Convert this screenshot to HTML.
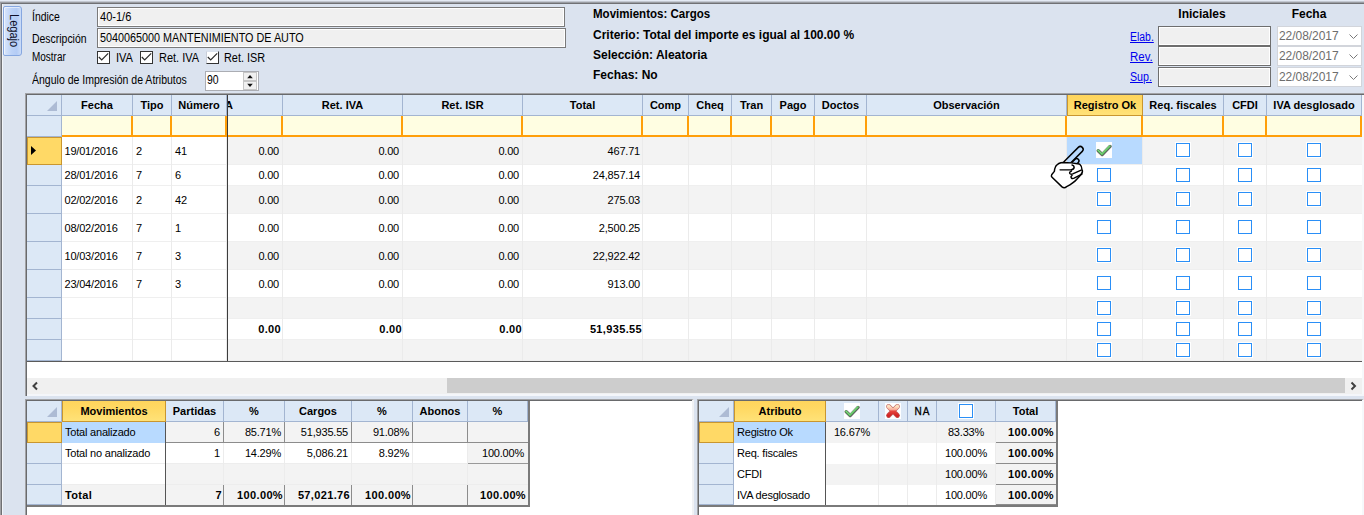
<!DOCTYPE html><html><head><meta charset="utf-8"><title>Legajo</title><style>
html,body{margin:0;padding:0}
body{width:1364px;height:515px;position:relative;overflow:hidden;background:#dbe3ef;font-family:"Liberation Sans",sans-serif;font-size:11px;color:#000}
div,span,a{position:absolute;box-sizing:border-box;white-space:nowrap;line-height:13px}
.b{font-weight:bold}
.tb{background:#f0f0f0;border:1px solid #7a7a7a;box-shadow:inset 1px 1px 0 #fff,inset -1px -1px 0 #fff}
.lbl{font-size:12px;transform:scaleX(0.87);transform-origin:0 0}
.hd{background:#dce8f6;border-right:1px solid #a3b5d1;border-bottom:1px solid #a3b5d1;font-weight:bold;text-align:center;font-size:11px;padding-top:4px;height:21px}
.hy{background:linear-gradient(#ffd55c,#ffd964 40%,#ffe278);border:1px solid #c9962f;border-top:none}
.cell{font-size:11px;letter-spacing:-0.2px}
.cell.b{letter-spacing:0.35px}
.r{text-align:right}
.c{text-align:center}
.cb{width:16px;height:16px;border:1px solid #fff;background:#fff}
.cb:after{content:"";position:absolute;left:0;top:0;width:14px;height:14px;border:1px solid #2a8ff7;box-sizing:border-box}
a{color:#0000ee;text-decoration:underline}
</style></head><body>
<div style="left:0;top:0;width:1364px;height:1px;background:#e4eaf4"></div>
<div style="left:0;top:1px;width:1364px;height:1px;background:#c3c8d1"></div>
<div style="left:0;top:2px;width:1364px;height:1px;background:#9a9da3"></div>
<div style="left:0;top:3px;width:1364px;height:1px;background:#707174"></div>
<div style="left:0;top:3px;width:1px;height:512px;background:#a0a1a4"></div>
<div style="left:1px;top:4px;width:1px;height:511px;background:#6f7073"></div>
<div style="left:2px;top:4px;width:1px;height:511px;background:#f2f5f9"></div>
<div style="left:3px;top:6px;width:19px;height:50px;background:linear-gradient(90deg,#d9e6fb 0%,#bcd2f7 45%,#b4ccf5 75%,#cbdcf8 100%);border:1px solid #86a7e0;border-radius:2px 3px 3px 2px;box-shadow:inset 1px 1px 0 rgba(255,255,255,0.55)"></div>
<div style="left:5.6px;top:14px;width:15px;height:40px;writing-mode:vertical-rl;font-size:12px;line-height:15px;color:#101028;transform:scaleY(0.92);transform-origin:0 0">Legajo</div>
<div class="lbl" style="left:32px;top:11px;">Índice</div>
<div class="lbl" style="left:32px;top:33px;">Descripción</div>
<div class="lbl" style="left:32px;top:51px;transform:scaleX(0.83)">Mostrar</div>
<div class="lbl" style="left:32px;top:74px;transform:scaleX(0.876)">Ángulo de Impresión de Atributos</div>
<div class="tb" style="left:97px;top:7px;width:468px;height:20px"></div>
<div class="lbl" style="left:100px;top:11px;transform:scaleX(0.92)">40-1/6</div>
<div class="tb" style="left:97px;top:28px;width:469px;height:20px"></div>
<div class="lbl" style="left:100px;top:32px;transform:scaleX(0.90)">5040065000 MANTENIMIENTO DE AUTO</div>
<div style="left:97px;top:51px;width:13px;height:13px;border:1px solid #333;background:#fff"><svg width="11" height="11" viewBox="0 0 11 11" style="position:absolute;left:0;top:0"><path d="M0.8 5 L3.7 8 L10.2 1.4" fill="none" stroke="#2a2a2a" stroke-width="1.2"/></svg></div>
<div class="lbl" style="left:116px;top:52px;transform:scaleX(0.92)">IVA</div>
<div style="left:140px;top:51px;width:13px;height:13px;border:1px solid #333;background:#fff"><svg width="11" height="11" viewBox="0 0 11 11" style="position:absolute;left:0;top:0"><path d="M0.8 5 L3.7 8 L10.2 1.4" fill="none" stroke="#2a2a2a" stroke-width="1.2"/></svg></div>
<div class="lbl" style="left:159px;top:52px;transform:scaleX(0.916)">Ret. IVA</div>
<div style="left:206px;top:51px;width:13px;height:13px;border:1px solid #333;border-top-color:#dbe3ef;border-left-color:#c9ced8;background:#fff"><svg width="11" height="11" viewBox="0 0 11 11" style="position:absolute;left:0;top:0"><path d="M0.8 5 L3.7 8 L10.2 1.4" fill="none" stroke="#2a2a2a" stroke-width="1.2"/></svg></div>
<div class="lbl" style="left:224px;top:52px;transform:scaleX(0.906)">Ret. ISR</div>
<div style="left:205px;top:71px;width:54px;height:20px;background:#fff;border:1px solid #abadb3"></div>
<div class="lbl" style="left:207px;top:74px;">90</div>
<div style="left:243px;top:72px;width:14px;height:9px;background:#f0f0f0;border:1px solid #c6c6c6"></div>
<div style="left:243px;top:81px;width:14px;height:9px;background:#f0f0f0;border:1px solid #c6c6c6"></div>
<svg style="position:absolute;left:243px;top:72px" width="14" height="18"><path d="M4.2 6.3 L7 3 L9.8 6.3 Z M4.2 11.7 L7 15 L9.8 11.7 Z" fill="#111"/></svg>
<div class="b" style="left:593px;top:8px;font-size:12px;transform:scaleX(0.96);transform-origin:0 0">Movimientos: Cargos</div>
<div class="b" style="left:593px;top:29px;font-size:12px">Criterio: Total del importe es igual al 100.00 %</div>
<div class="b" style="left:593px;top:49px;font-size:12px">Selección: Aleatoria</div>
<div class="b" style="left:593px;top:69px;font-size:12px">Fechas: No</div>
<div class="b" style="left:1158px;top:8px;width:88px;text-align:center;font-size:12px">Iniciales</div>
<div class="b" style="left:1277px;top:8px;width:64px;text-align:center;font-size:12px">Fecha</div>
<a class="lbl" style="left:1130px;top:31px;transform:scaleX(0.87)">Elab.</a>
<div class="tb" style="left:1158px;top:26px;width:113px;height:20px;border-color:#6e6e6e"></div>
<div style="left:1277px;top:26px;width:85px;height:20px;background:#fff;border:1px solid #d2d5db"></div>
<div style="left:1279px;top:30px;font-size:12px;letter-spacing:-0.05px;color:#6d6d6d">22/08/2017</div>
<svg style="position:absolute;left:1349px;top:34px" width="9" height="6"><path d="M0.5 0.5 L4.5 4.5 L8.5 0.5" fill="none" stroke="#7a7a7a" stroke-width="1"/></svg>
<a class="lbl" style="left:1130px;top:51px;transform:scaleX(0.955)">Rev.</a>
<div class="tb" style="left:1158px;top:46px;width:113px;height:20px;border-color:#6e6e6e"></div>
<div style="left:1277px;top:46px;width:85px;height:20px;background:#fff;border:1px solid #d2d5db"></div>
<div style="left:1279px;top:50px;font-size:12px;letter-spacing:-0.05px;color:#6d6d6d">22/08/2017</div>
<svg style="position:absolute;left:1349px;top:54px" width="9" height="6"><path d="M0.5 0.5 L4.5 4.5 L8.5 0.5" fill="none" stroke="#7a7a7a" stroke-width="1"/></svg>
<a class="lbl" style="left:1130px;top:70.5px;transform:scaleX(0.89)">Sup.</a>
<div class="tb" style="left:1158px;top:67px;width:113px;height:20px;border-color:#6e6e6e"></div>
<div style="left:1277px;top:67px;width:85px;height:20px;background:#fff;border:1px solid #d2d5db"></div>
<div style="left:1279px;top:71px;font-size:12px;letter-spacing:-0.05px;color:#6d6d6d">22/08/2017</div>
<svg style="position:absolute;left:1349px;top:75px" width="9" height="6"><path d="M0.5 0.5 L4.5 4.5 L8.5 0.5" fill="none" stroke="#7a7a7a" stroke-width="1"/></svg>
<div style="left:25px;top:93px;width:1339px;height:303px;background:#fff;border-left:1px solid #a2a3a6;border-top:1px solid #a2a3a6"></div>
<div style="left:26px;top:94px;width:1338px;height:302px;background:#fff;border-left:1px solid #696a6c;border-top:1px solid #696a6c"></div>
<div style="left:1362px;top:95px;width:2px;height:301px;background:#f6f8fb"></div>
<div class="hd" style="left:27px;top:95px;width:35px"></div>
<div class="hd" style="left:62px;top:95px;width:71px">Fecha</div>
<div class="hd" style="left:133px;top:95px;width:39px">Tipo</div>
<div class="hd" style="left:172px;top:95px;width:55px">Número</div>
<div class="hd" style="left:228px;top:95px;width:55px;overflow:hidden"><span style="left:-3px;top:4px">A</span></div>
<div class="hd" style="left:283px;top:95px;width:120px">Ret. IVA</div>
<div class="hd" style="left:403px;top:95px;width:120px">Ret. ISR</div>
<div class="hd" style="left:523px;top:95px;width:120px">Total</div>
<div class="hd" style="left:643px;top:95px;width:46px">Comp</div>
<div class="hd" style="left:689px;top:95px;width:43px">Cheq</div>
<div class="hd" style="left:732px;top:95px;width:40px">Tran</div>
<div class="hd" style="left:772px;top:95px;width:43px">Pago</div>
<div class="hd" style="left:815px;top:95px;width:52px">Doctos</div>
<div class="hd" style="left:867px;top:95px;width:200px">Observación</div>
<div class="hd hy" style="left:1067px;top:95px;width:76px">Registro Ok</div>
<div class="hd" style="left:1143px;top:95px;width:81px">Req. fiscales</div>
<div class="hd" style="left:1224px;top:95px;width:43px">CFDI</div>
<div class="hd" style="left:1267px;top:95px;width:95px">IVA desglosado</div>
<svg style="position:absolute;left:46px;top:100px" width="12" height="12"><path d="M11 1 L11 11 L1 11 Z" fill="#adbbd4"/></svg>
<div style="left:27px;top:116px;width:35px;height:21px;background:#dce8f6;border-right:1px solid #a3b5d1;border-bottom:1px solid #a3b5d1"></div>
<div style="left:62px;top:116px;width:1300px;height:21px;background:#fffee2;border-bottom:2px solid #ff9f0a;border-right:2px solid #ff9f0a"></div>
<div style="left:131px;top:116px;width:2px;height:19px;background:#ff9f0a"></div>
<div style="left:170px;top:116px;width:2px;height:19px;background:#ff9f0a"></div>
<div style="left:225px;top:116px;width:2px;height:19px;background:#ff9f0a"></div>
<div style="left:281px;top:116px;width:2px;height:19px;background:#ff9f0a"></div>
<div style="left:401px;top:116px;width:2px;height:19px;background:#ff9f0a"></div>
<div style="left:521px;top:116px;width:2px;height:19px;background:#ff9f0a"></div>
<div style="left:641px;top:116px;width:2px;height:19px;background:#ff9f0a"></div>
<div style="left:687px;top:116px;width:2px;height:19px;background:#ff9f0a"></div>
<div style="left:730px;top:116px;width:2px;height:19px;background:#ff9f0a"></div>
<div style="left:770px;top:116px;width:2px;height:19px;background:#ff9f0a"></div>
<div style="left:813px;top:116px;width:2px;height:19px;background:#ff9f0a"></div>
<div style="left:865px;top:116px;width:2px;height:19px;background:#ff9f0a"></div>
<div style="left:1065px;top:116px;width:2px;height:19px;background:#ff9f0a"></div>
<div style="left:1141px;top:116px;width:2px;height:19px;background:#ff9f0a"></div>
<div style="left:1222px;top:116px;width:2px;height:19px;background:#ff9f0a"></div>
<div style="left:1265px;top:116px;width:2px;height:19px;background:#ff9f0a"></div>
<div style="left:27px;top:137px;width:35px;height:28px;background:#dce8f6;border-right:1px solid #a3b5d1;border-bottom:1px solid #a3b5d1"></div>
<div style="left:228px;top:137px;width:1134px;height:28px;background:#f3f3f3"></div>
<div style="left:62px;top:164px;width:1300px;height:1px;background:#efefef"></div>
<div style="left:27px;top:165px;width:35px;height:21px;background:#dce8f6;border-right:1px solid #a3b5d1;border-bottom:1px solid #a3b5d1"></div>
<div style="left:228px;top:165px;width:1134px;height:21px;background:#fff"></div>
<div style="left:62px;top:185px;width:1300px;height:1px;background:#efefef"></div>
<div style="left:27px;top:186px;width:35px;height:28px;background:#dce8f6;border-right:1px solid #a3b5d1;border-bottom:1px solid #a3b5d1"></div>
<div style="left:228px;top:186px;width:1134px;height:28px;background:#f3f3f3"></div>
<div style="left:62px;top:213px;width:1300px;height:1px;background:#efefef"></div>
<div style="left:27px;top:214px;width:35px;height:28px;background:#dce8f6;border-right:1px solid #a3b5d1;border-bottom:1px solid #a3b5d1"></div>
<div style="left:228px;top:214px;width:1134px;height:28px;background:#fff"></div>
<div style="left:62px;top:241px;width:1300px;height:1px;background:#efefef"></div>
<div style="left:27px;top:242px;width:35px;height:28px;background:#dce8f6;border-right:1px solid #a3b5d1;border-bottom:1px solid #a3b5d1"></div>
<div style="left:228px;top:242px;width:1134px;height:28px;background:#f3f3f3"></div>
<div style="left:62px;top:269px;width:1300px;height:1px;background:#efefef"></div>
<div style="left:27px;top:270px;width:35px;height:28px;background:#dce8f6;border-right:1px solid #a3b5d1;border-bottom:1px solid #a3b5d1"></div>
<div style="left:228px;top:270px;width:1134px;height:28px;background:#fff"></div>
<div style="left:62px;top:297px;width:1300px;height:1px;background:#efefef"></div>
<div style="left:27px;top:298px;width:35px;height:21px;background:#dce8f6;border-right:1px solid #a3b5d1;border-bottom:1px solid #a3b5d1"></div>
<div style="left:228px;top:298px;width:1134px;height:21px;background:#f3f3f3"></div>
<div style="left:62px;top:318px;width:1300px;height:1px;background:#efefef"></div>
<div style="left:27px;top:319px;width:35px;height:21px;background:#dce8f6;border-right:1px solid #a3b5d1;border-bottom:1px solid #a3b5d1"></div>
<div style="left:228px;top:319px;width:1134px;height:21px;background:#fff"></div>
<div style="left:62px;top:339px;width:1300px;height:1px;background:#efefef"></div>
<div style="left:27px;top:340px;width:35px;height:21px;background:#dce8f6;border-right:1px solid #a3b5d1;border-bottom:1px solid #a3b5d1"></div>
<div style="left:228px;top:340px;width:1134px;height:21px;background:#f3f3f3"></div>
<div style="left:62px;top:360px;width:1300px;height:1px;background:#efefef"></div>
<div style="left:27px;top:137px;width:35px;height:28px;background:#ffd966;border:1px solid #c9962f"></div>
<svg style="position:absolute;left:31px;top:146px" width="6" height="10"><path d="M0 0 L5 4.5 L0 9 Z" fill="#000"/></svg>
<div style="left:132px;top:137px;width:1px;height:224px;background:#ebebeb"></div>
<div style="left:171px;top:137px;width:1px;height:224px;background:#ebebeb"></div>
<div style="left:226px;top:137px;width:1px;height:224px;background:#ebebeb"></div>
<div style="left:282px;top:137px;width:1px;height:224px;background:#ebebeb"></div>
<div style="left:402px;top:137px;width:1px;height:224px;background:#ebebeb"></div>
<div style="left:522px;top:137px;width:1px;height:224px;background:#ebebeb"></div>
<div style="left:642px;top:137px;width:1px;height:224px;background:#ebebeb"></div>
<div style="left:688px;top:137px;width:1px;height:224px;background:#ebebeb"></div>
<div style="left:731px;top:137px;width:1px;height:224px;background:#ebebeb"></div>
<div style="left:771px;top:137px;width:1px;height:224px;background:#ebebeb"></div>
<div style="left:814px;top:137px;width:1px;height:224px;background:#ebebeb"></div>
<div style="left:866px;top:137px;width:1px;height:224px;background:#ebebeb"></div>
<div style="left:1066px;top:137px;width:1px;height:224px;background:#ebebeb"></div>
<div style="left:1142px;top:137px;width:1px;height:224px;background:#ebebeb"></div>
<div style="left:1223px;top:137px;width:1px;height:224px;background:#ebebeb"></div>
<div style="left:1266px;top:137px;width:1px;height:224px;background:#ebebeb"></div>
<div style="left:227px;top:95px;width:1px;height:267px;background:#3c3c3c"></div>
<div style="left:27px;top:361px;width:1335px;height:1px;background:#5a5a5a"></div>
<div class="cell" style="left:64.5px;top:145px">19/01/2016</div>
<div class="cell" style="left:136px;top:145px">2</div>
<div class="cell" style="left:175px;top:145px">41</div>
<div class="cell r" style="left:179px;width:100px;top:145px">0.00</div>
<div class="cell r" style="left:299px;width:100px;top:145px">0.00</div>
<div class="cell r" style="left:419px;width:100px;top:145px">0.00</div>
<div class="cell r" style="left:540px;width:100px;top:145px">467.71</div>
<div class="cell" style="left:64.5px;top:169px">28/01/2016</div>
<div class="cell" style="left:136px;top:169px">7</div>
<div class="cell" style="left:175px;top:169px">6</div>
<div class="cell r" style="left:179px;width:100px;top:169px">0.00</div>
<div class="cell r" style="left:299px;width:100px;top:169px">0.00</div>
<div class="cell r" style="left:419px;width:100px;top:169px">0.00</div>
<div class="cell r" style="left:540px;width:100px;top:169px">24,857.14</div>
<div class="cell" style="left:64.5px;top:194px">02/02/2016</div>
<div class="cell" style="left:136px;top:194px">2</div>
<div class="cell" style="left:175px;top:194px">42</div>
<div class="cell r" style="left:179px;width:100px;top:194px">0.00</div>
<div class="cell r" style="left:299px;width:100px;top:194px">0.00</div>
<div class="cell r" style="left:419px;width:100px;top:194px">0.00</div>
<div class="cell r" style="left:540px;width:100px;top:194px">275.03</div>
<div class="cell" style="left:64.5px;top:222px">08/02/2016</div>
<div class="cell" style="left:136px;top:222px">7</div>
<div class="cell" style="left:175px;top:222px">1</div>
<div class="cell r" style="left:179px;width:100px;top:222px">0.00</div>
<div class="cell r" style="left:299px;width:100px;top:222px">0.00</div>
<div class="cell r" style="left:419px;width:100px;top:222px">0.00</div>
<div class="cell r" style="left:540px;width:100px;top:222px">2,500.25</div>
<div class="cell" style="left:64.5px;top:250px">10/03/2016</div>
<div class="cell" style="left:136px;top:250px">7</div>
<div class="cell" style="left:175px;top:250px">3</div>
<div class="cell r" style="left:179px;width:100px;top:250px">0.00</div>
<div class="cell r" style="left:299px;width:100px;top:250px">0.00</div>
<div class="cell r" style="left:419px;width:100px;top:250px">0.00</div>
<div class="cell r" style="left:540px;width:100px;top:250px">22,922.42</div>
<div class="cell" style="left:64.5px;top:278px">23/04/2016</div>
<div class="cell" style="left:136px;top:278px">7</div>
<div class="cell" style="left:175px;top:278px">3</div>
<div class="cell r" style="left:179px;width:100px;top:278px">0.00</div>
<div class="cell r" style="left:299px;width:100px;top:278px">0.00</div>
<div class="cell r" style="left:419px;width:100px;top:278px">0.00</div>
<div class="cell r" style="left:540px;width:100px;top:278px">913.00</div>
<div class="cell r b" style="left:181px;width:100px;top:323px">0.00</div>
<div class="cell r b" style="left:302px;width:100px;top:323px">0.00</div>
<div class="cell r b" style="left:422px;width:100px;top:323px">0.00</div>
<div class="cell r b" style="left:542px;width:100px;top:323px">51,935.55</div>
<div style="left:1067px;top:137px;width:75px;height:27px;background:#b8daff"></div>
<div class="cb" style="left:1175px;top:142px"></div>
<div class="cb" style="left:1237px;top:142px"></div>
<div class="cb" style="left:1306px;top:142px"></div>
<div class="cb" style="left:1096px;top:167px"></div>
<div class="cb" style="left:1175px;top:167px"></div>
<div class="cb" style="left:1237px;top:167px"></div>
<div class="cb" style="left:1306px;top:167px"></div>
<div class="cb" style="left:1096px;top:191px"></div>
<div class="cb" style="left:1175px;top:191px"></div>
<div class="cb" style="left:1237px;top:191px"></div>
<div class="cb" style="left:1306px;top:191px"></div>
<div class="cb" style="left:1096px;top:219px"></div>
<div class="cb" style="left:1175px;top:219px"></div>
<div class="cb" style="left:1237px;top:219px"></div>
<div class="cb" style="left:1306px;top:219px"></div>
<div class="cb" style="left:1096px;top:247px"></div>
<div class="cb" style="left:1175px;top:247px"></div>
<div class="cb" style="left:1237px;top:247px"></div>
<div class="cb" style="left:1306px;top:247px"></div>
<div class="cb" style="left:1096px;top:275px"></div>
<div class="cb" style="left:1175px;top:275px"></div>
<div class="cb" style="left:1237px;top:275px"></div>
<div class="cb" style="left:1306px;top:275px"></div>
<div class="cb" style="left:1096px;top:300px"></div>
<div class="cb" style="left:1175px;top:300px"></div>
<div class="cb" style="left:1237px;top:300px"></div>
<div class="cb" style="left:1306px;top:300px"></div>
<div class="cb" style="left:1096px;top:321px"></div>
<div class="cb" style="left:1175px;top:321px"></div>
<div class="cb" style="left:1237px;top:321px"></div>
<div class="cb" style="left:1306px;top:321px"></div>
<div class="cb" style="left:1096px;top:342px"></div>
<div class="cb" style="left:1175px;top:342px"></div>
<div class="cb" style="left:1237px;top:342px"></div>
<div class="cb" style="left:1306px;top:342px"></div>
<svg style="position:absolute;left:1096px;top:142px;background:#fff" width="16" height="16" viewBox="0 0 16 16"><path d="M2 8.4 L5.9 12.2 L13.8 4.1" fill="none" stroke="#5f5f5f" stroke-width="3.3" stroke-linecap="round" stroke-linejoin="round" transform="translate(0.25,0.35)"/><path d="M2 8.4 L5.9 12.2 L13.8 4.1" fill="none" stroke="#5cc160" stroke-width="2" stroke-linecap="round" stroke-linejoin="round"/><path d="M2.2 8.1 L5.9 11.6 L13.5 3.9" fill="none" stroke="#98e28f" stroke-width="0.7" stroke-linecap="round" stroke-linejoin="round"/></svg>
<svg style="position:absolute;left:1046px;top:142px" width="44" height="50" viewBox="0 0 453 515"><g stroke="#000" stroke-width="15" stroke-linejoin="round" stroke-linecap="round"><rect x="-29" y="-29" width="58" height="260" rx="29" fill="none" transform="translate(353,76) rotate(45)"/><rect x="-23" y="-23" width="46" height="90" rx="23" fill="none" transform="translate(316,194) rotate(45)"/><path fill="#fff" d="M178 211 C150 212 118 224 100 250 Q88 275 86 303 L58 338 Q50 350 62 362 L165 462 Q188 482 212 460 C240 445 290 415 317 383 Q345 355 360 335 Q385 305 370 284 Q372 250 350 231 Q340 222 323 224 L260 215 Z"/><path fill="none" d="M145 287 L255 287 Q292 282 290 258 Q288 240 268 236 M262 300 Q236 310 246 326 Q254 336 275 328 L362 290 M268 345 Q250 358 262 372 Q272 380 290 372 L370 330"/></g></svg>
<div style="left:27px;top:378px;width:1335px;height:16px;background:#f0f0f0"></div>
<div style="left:27px;top:394px;width:1337px;height:2px;background:#f4f6fa"></div>
<div style="left:447px;top:378px;width:898px;height:15px;background:#cdcdcd"></div>
<svg style="position:absolute;left:31px;top:381px" width="8" height="10"><path d="M6 1.5 L2.5 5 L6 8.5" fill="none" stroke="#404040" stroke-width="2"/></svg>
<svg style="position:absolute;left:1349px;top:381px" width="8" height="10"><path d="M2.5 1.5 L6 5 L2.5 8.5" fill="none" stroke="#404040" stroke-width="2"/></svg>
<div style="left:25px;top:399px;width:669px;height:116px;background:#fff;border-left:1px solid #a2a3a6;border-top:1px solid #a2a3a6;border-right:2px solid #f1f2f4"></div>
<div style="left:26px;top:400px;width:666px;height:115px;background:#fff;border-left:1px solid #696a6c;border-top:1px solid #696a6c"></div>
<div style="left:697px;top:399px;width:667px;height:116px;background:#fff;border-left:1px solid #a2a3a6;border-top:1px solid #a2a3a6;border-right:2px solid #f6f8fb"></div>
<div style="left:698px;top:400px;width:664px;height:115px;background:#fff;border-left:1px solid #696a6c;border-top:1px solid #696a6c"></div>
<div class="hd" style="left:27px;top:401px;width:35px"></div>
<div class="hd hy" style="left:62px;top:401px;width:104px">Movimientos</div>
<div class="hd" style="left:166px;top:401px;width:58px">Partidas</div>
<div class="hd" style="left:224px;top:401px;width:61px">%</div>
<div class="hd" style="left:285px;top:401px;width:67px">Cargos</div>
<div class="hd" style="left:352px;top:401px;width:61px">%</div>
<div class="hd" style="left:413px;top:401px;width:55px">Abonos</div>
<div class="hd" style="left:468px;top:401px;width:60px">%</div>
<svg style="position:absolute;left:46px;top:406px" width="12" height="12"><path d="M11 1 L11 11 L1 11 Z" fill="#adbbd4"/></svg>
<div style="left:27px;top:422px;width:35px;height:21px;background:#dce8f6;border-right:1px solid #a3b5d1;border-bottom:1px solid #a3b5d1"></div>
<div style="left:166px;top:422px;width:362px;height:21px;background:#f3f3f3"></div>
<div style="left:27px;top:443px;width:35px;height:21px;background:#dce8f6;border-right:1px solid #a3b5d1;border-bottom:1px solid #a3b5d1"></div>
<div style="left:166px;top:443px;width:362px;height:21px;background:#fff"></div>
<div style="left:27px;top:464px;width:35px;height:21px;background:#dce8f6;border-right:1px solid #a3b5d1;border-bottom:1px solid #a3b5d1"></div>
<div style="left:166px;top:464px;width:362px;height:21px;background:#f3f3f3"></div>
<div style="left:27px;top:485px;width:35px;height:20px;background:#dce8f6;border-right:1px solid #a3b5d1;border-bottom:1px solid #a3b5d1"></div>
<div style="left:166px;top:485px;width:362px;height:20px;background:#fff"></div>
<div style="left:62px;top:463px;width:466px;height:1px;background:#ededed"></div>
<div style="left:62px;top:484px;width:466px;height:1px;background:#ededed"></div>
<div style="left:27px;top:422px;width:35px;height:21px;background:#ffd966;border:1px solid #c9962f"></div>
<div style="left:62px;top:422px;width:104px;height:21px;background:#b8daff"></div>
<div style="left:468px;top:443px;width:60px;height:21px;background:#f3f3f3;border-bottom:1px solid #999"></div>
<div style="left:62px;top:485px;width:466px;height:20px;background:#f3f3f3"></div>
<div style="left:165px;top:443px;width:1px;height:42px;background:#ececec"></div>
<div style="left:223px;top:443px;width:1px;height:42px;background:#ececec"></div>
<div style="left:284px;top:443px;width:1px;height:42px;background:#ececec"></div>
<div style="left:351px;top:443px;width:1px;height:42px;background:#ececec"></div>
<div style="left:412px;top:443px;width:1px;height:42px;background:#ececec"></div>
<div style="left:467px;top:443px;width:1px;height:42px;background:#ececec"></div>
<div style="left:223px;top:422px;width:1px;height:21px;background:#8c8c8c"></div>
<div style="left:223px;top:485px;width:1px;height:20px;background:#8c8c8c"></div>
<div style="left:284px;top:422px;width:1px;height:21px;background:#8c8c8c"></div>
<div style="left:284px;top:485px;width:1px;height:20px;background:#8c8c8c"></div>
<div style="left:351px;top:422px;width:1px;height:21px;background:#8c8c8c"></div>
<div style="left:351px;top:485px;width:1px;height:20px;background:#8c8c8c"></div>
<div style="left:412px;top:422px;width:1px;height:21px;background:#8c8c8c"></div>
<div style="left:412px;top:485px;width:1px;height:20px;background:#8c8c8c"></div>
<div style="left:467px;top:422px;width:1px;height:21px;background:#8c8c8c"></div>
<div style="left:467px;top:485px;width:1px;height:20px;background:#8c8c8c"></div>
<div style="left:166px;top:442px;width:362px;height:1px;background:#8c8c8c"></div>
<div style="left:165px;top:422px;width:1px;height:83px;background:#555"></div>
<div style="left:528px;top:401px;width:2px;height:106px;background:#7a7a7a"></div>
<div style="left:27px;top:505px;width:503px;height:2px;background:#7a7a7a"></div>
<div class="cell" style="left:65px;top:426px">Total analizado</div>
<div class="cell r" style="left:160px;width:60px;top:426px">6</div>
<div class="cell r" style="left:221px;width:60px;top:426px">85.71%</div>
<div class="cell r" style="left:288px;width:60px;top:426px">51,935.55</div>
<div class="cell r" style="left:349px;width:60px;top:426px">91.08%</div>
<div class="cell" style="left:65px;top:447px">Total no analizado</div>
<div class="cell r" style="left:160px;width:60px;top:447px">1</div>
<div class="cell r" style="left:221px;width:60px;top:447px">14.29%</div>
<div class="cell r" style="left:288px;width:60px;top:447px">5,086.21</div>
<div class="cell r" style="left:349px;width:60px;top:447px">8.92%</div>
<div class="cell r" style="left:464px;width:60px;top:447px">100.00%</div>
<div class="cell b" style="left:65px;top:489px">Total</div>
<div class="cell r b" style="left:162px;width:60px;top:489px">7</div>
<div class="cell r b" style="left:223px;width:60px;top:489px">100.00%</div>
<div class="cell r b" style="left:290px;width:60px;top:489px">57,021.76</div>
<div class="cell r b" style="left:351px;width:60px;top:489px">100.00%</div>
<div class="cell r b" style="left:466px;width:60px;top:489px">100.00%</div>
<div class="hd" style="left:699px;top:401px;width:35px;"></div>
<div class="hd hy" style="left:734px;top:401px;width:92px;">Atributo</div>
<div class="hd" style="left:826px;top:401px;width:53px;"></div>
<div class="hd" style="left:879px;top:401px;width:29px;"></div>
<div class="hd" style="left:908px;top:401px;width:29px;font-size:10px;font-weight:normal;-webkit-text-stroke:0.3px #000;letter-spacing:1px;padding-top:4px;padding-left:1px;">NA</div>
<div class="hd" style="left:937px;top:401px;width:59px;"></div>
<div class="hd" style="left:996px;top:401px;width:60px;">Total</div>
<svg style="position:absolute;left:718px;top:406px" width="12" height="12"><path d="M11 1 L11 11 L1 11 Z" fill="#adbbd4"/></svg>
<svg style="position:absolute;left:844px;top:403px;background:#fff" width="16" height="16" viewBox="0 0 16 16"><path d="M2 8.4 L5.9 12.2 L13.8 4.1" fill="none" stroke="#5f5f5f" stroke-width="3.3" stroke-linecap="round" stroke-linejoin="round" transform="translate(0.25,0.35)"/><path d="M2 8.4 L5.9 12.2 L13.8 4.1" fill="none" stroke="#5cc160" stroke-width="2" stroke-linecap="round" stroke-linejoin="round"/><path d="M2.2 8.1 L5.9 11.6 L13.5 3.9" fill="none" stroke="#98e28f" stroke-width="0.7" stroke-linecap="round" stroke-linejoin="round"/></svg>
<svg style="position:absolute;left:885px;top:403px" width="16" height="16" viewBox="0 0 16 16"><defs><linearGradient id="rx" x1="0" y1="0" x2="0" y2="1"><stop offset="0" stop-color="#fde0c0"/><stop offset="0.36" stop-color="#f9a796"/><stop offset="0.5" stop-color="#e6463e"/><stop offset="1" stop-color="#d22525"/></linearGradient></defs><rect width="16" height="16" fill="#fff" opacity="0.92"/><path d="M3.6 3.6 L12.4 12.4 M12.4 3.6 L3.6 12.4" fill="none" stroke="#a83232" stroke-width="5" stroke-linecap="round" opacity="0.75"/><path d="M3.6 3.6 L12.4 12.4 M12.4 3.6 L3.6 12.4" fill="none" stroke="url(#rx)" stroke-width="3.8" stroke-linecap="round"/></svg>
<div class="cb" style="left:958px;top:403px"></div>
<div style="left:699px;top:422px;width:35px;height:21px;background:#dce8f6;border-right:1px solid #a3b5d1;border-bottom:1px solid #a3b5d1"></div>
<div style="left:826px;top:422px;width:170px;height:21px;background:#f3f3f3"></div>
<div style="left:996px;top:422px;width:60px;height:21px;background:#f3f3f3;border-bottom:1px solid #8c8c8c"></div>
<div style="left:699px;top:443px;width:35px;height:21px;background:#dce8f6;border-right:1px solid #a3b5d1;border-bottom:1px solid #a3b5d1"></div>
<div style="left:826px;top:443px;width:170px;height:21px;background:#fff"></div>
<div style="left:996px;top:443px;width:60px;height:21px;background:#f3f3f3;border-bottom:1px solid #8c8c8c"></div>
<div style="left:699px;top:464px;width:35px;height:21px;background:#dce8f6;border-right:1px solid #a3b5d1;border-bottom:1px solid #a3b5d1"></div>
<div style="left:826px;top:464px;width:170px;height:21px;background:#f3f3f3"></div>
<div style="left:996px;top:464px;width:60px;height:21px;background:#f3f3f3;border-bottom:1px solid #8c8c8c"></div>
<div style="left:699px;top:485px;width:35px;height:20px;background:#dce8f6;border-right:1px solid #a3b5d1;border-bottom:1px solid #a3b5d1"></div>
<div style="left:826px;top:485px;width:170px;height:20px;background:#fff"></div>
<div style="left:996px;top:485px;width:60px;height:20px;background:#f3f3f3;border-bottom:1px solid #8c8c8c"></div>
<div style="left:699px;top:422px;width:35px;height:21px;background:#ffd966;border:1px solid #c9962f"></div>
<div style="left:734px;top:422px;width:92px;height:21px;background:#b8daff"></div>
<div style="left:878px;top:422px;width:1px;height:83px;background:#ececec"></div>
<div style="left:907px;top:422px;width:1px;height:83px;background:#ececec"></div>
<div style="left:936px;top:422px;width:1px;height:83px;background:#ececec"></div>
<div style="left:995px;top:422px;width:1px;height:83px;background:#ececec"></div>
<div style="left:825px;top:422px;width:1px;height:83px;background:#555"></div>
<div style="left:1056px;top:401px;width:2px;height:106px;background:#7a7a7a"></div>
<div style="left:699px;top:505px;width:359px;height:2px;background:#7a7a7a"></div>
<div class="cell" style="left:737px;top:426px">Registro Ok</div>
<div class="cell c" style="left:826px;width:52px;top:426px">16.67%</div>
<div class="cell c" style="left:937px;width:58px;top:426px">83.33%</div>
<div class="cell r b" style="left:998px;width:56px;top:426px">100.00%</div>
<div class="cell" style="left:737px;top:447px">Req. fiscales</div>
<div class="cell c" style="left:937px;width:58px;top:447px">100.00%</div>
<div class="cell r b" style="left:998px;width:56px;top:447px">100.00%</div>
<div class="cell" style="left:737px;top:468px">CFDI</div>
<div class="cell c" style="left:937px;width:58px;top:468px">100.00%</div>
<div class="cell r b" style="left:998px;width:56px;top:468px">100.00%</div>
<div class="cell" style="left:737px;top:489px">IVA desglosado</div>
<div class="cell c" style="left:937px;width:58px;top:489px">100.00%</div>
<div class="cell r b" style="left:998px;width:56px;top:489px">100.00%</div>
</body></html>
